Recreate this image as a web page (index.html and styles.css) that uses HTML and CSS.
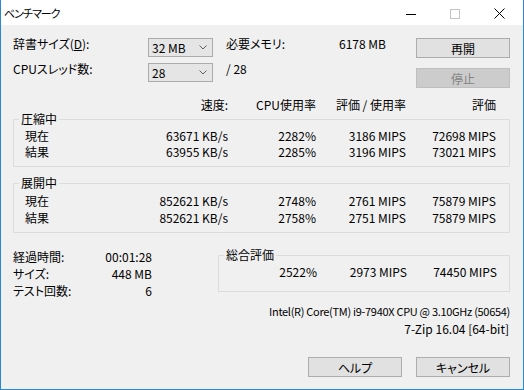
FILE: index.html
```html
<!DOCTYPE html>
<html lang="ja">
<head>
    <meta charset="UTF-8">
    <title>ベンチマーク</title>
    <link rel="stylesheet" href="styles.css">
</head>
<body>
    <div class="window">
        <div class="titlebar">
            <span class="title">ベンチマーク</span>
            <div class="caption">
                <span class="cap-btn">
                    <svg width="10" height="10" viewBox="0 0 10 10"><path d="M0 5.5h10" stroke="#000" stroke-width="1"/></svg>
                </span>
                <span class="cap-btn">
                    <svg width="10" height="10" viewBox="0 0 10 10"><rect x="0.5" y="0.5" width="9" height="9" fill="none" stroke="#c4c4c4" stroke-width="1"/></svg>
                </span>
                <span class="cap-btn">
                    <svg width="11" height="11" viewBox="0 0 11 11"><path d="M0.5 0.5l10 10M10.5 0.5l-10 10" stroke="#000" stroke-width="1"/></svg>
                </span>
            </div>
        </div>

        <div class="content">
            <div class="top">
                <div class="settings">
                    <label class="field-label">辞書サイズ(<u>D</u>):</label>
                    <div class="combo">
                        <span>32 MB</span>
                        <svg width="8" height="5" viewBox="0 0 8 5"><path d="M0.5 0.5l3.5 3.5 3.5-3.5" fill="none" stroke="#606060" stroke-width="1"/></svg>
                    </div>
                    <div class="info">
                        <span>必要メモリ:</span>
                        <span>6178 MB</span>
                    </div>
                    <label class="field-label">CPUスレッド数:</label>
                    <div class="combo">
                        <span>28</span>
                        <svg width="8" height="5" viewBox="0 0 8 5"><path d="M0.5 0.5l3.5 3.5 3.5-3.5" fill="none" stroke="#606060" stroke-width="1"/></svg>
                    </div>
                    <div class="info">
                        <span>/ 28</span>
                    </div>
                </div>
                <div class="actions">
                    <button class="btn">再開</button>
                    <button class="btn" disabled>停止</button>
                </div>
            </div>

            <div class="cols header">
                <span></span>
                <span>速度:</span>
                <span>CPU使用率</span>
                <span>評価 / 使用率</span>
                <span>評価</span>
            </div>

            <fieldset class="group">
                <legend>圧縮中</legend>
                <div class="cols">
                    <span>現在</span>
                    <span>63671 KB/s</span>
                    <span>2282%</span>
                    <span>3186 MIPS</span>
                    <span>72698 MIPS</span>
                    <span>結果</span>
                    <span>63955 KB/s</span>
                    <span>2285%</span>
                    <span>3196 MIPS</span>
                    <span>73021 MIPS</span>
                </div>
            </fieldset>

            <fieldset class="group group-decomp">
                <legend>展開中</legend>
                <div class="cols">
                    <span>現在</span>
                    <span>852621 KB/s</span>
                    <span>2748%</span>
                    <span>2761 MIPS</span>
                    <span>75879 MIPS</span>
                    <span>結果</span>
                    <span>852621 KB/s</span>
                    <span>2758%</span>
                    <span>2751 MIPS</span>
                    <span>75879 MIPS</span>
                </div>
            </fieldset>

            <div class="summary">
                <div class="stats">
                    <span>経過時間:</span><span>00:01:28</span>
                    <span>サイズ:</span><span>448 MB</span>
                    <span>テスト回数:</span><span>6</span>
                </div>
                <fieldset class="group total">
                    <legend>総合評価</legend>
                    <div class="total-cols">
                        <span>2522%</span>
                        <span>2973 MIPS</span>
                        <span>74450 MIPS</span>
                    </div>
                </fieldset>
            </div>

            <div class="cpu">Intel(R) Core(TM) i9-7940X CPU @ 3.10GHz (50654)</div>
            <div class="version">7-Zip 16.04 [64-bit]</div>

            <div class="footer">
                <button class="btn">ヘルプ</button>
                <button class="btn">キャンセル</button>
            </div>
        </div>
    </div>
</body>
</html>
```

FILE: styles.css
```css
body {
    margin: 0;
    font-family: "Noto Sans CJK JP", "Noto Sans", sans-serif;
    font-size: 12px;
    font-feature-settings: "palt";
    color: #000;
    background: #fff;
}
.window {
    width: 524px;
    height: 390px;
    box-sizing: border-box;
    border: 1px solid #2b88d8;
    border-top: none;
    background: #f0f0f0;
    display: flex;
    flex-direction: column;
}
.titlebar {
    height: 25px;
    background: #fff;
    display: flex;
    align-items: center;
    padding-left: 3px;
    padding-right: 2px;
}
.title {
    line-height: 14px;
    margin-top: 1px;
    font-size: 11px;
    letter-spacing: -1px;
}
.caption {
    margin-left: auto;
    display: flex;
    height: 100%;
}
.cap-btn {
    width: 44px;
    display: flex;
    align-items: center;
    justify-content: center;
    padding-top: 2px;
}

/* main area */
.content {
    flex: 1;
    display: flex;
    flex-direction: column;
    padding: 13px 13px 12px 12px;
}
.top {
    display: flex;
    align-items: flex-start;
}
.settings {
    display: grid;
    grid-template-columns: 135px 65px 173px;
    grid-auto-rows: 19px;
    row-gap: 6px;
}
.field-label {
    line-height: 12px;
}
.combo {
    box-sizing: border-box;
    height: 19px;
    border: 1px solid #acacac;
    background: #e5e5e5;
    display: flex;
    align-items: center;
    justify-content: space-between;
    padding: 0 5px 0 3px;
}
.info {
    display: flex;
    justify-content: space-between;
    padding-left: 13px;
    line-height: 12px;
}
.actions {
    margin-left: auto;
    display: flex;
    flex-direction: column;
    gap: 10px;
}
.btn {
    width: 94px;
    height: 20px;
    box-sizing: border-box;
    border: 1px solid #adadad;
    background: #e1e1e1;
    font-family: inherit;
    font-size: 12px;
    font-feature-settings: "palt";
    color: #000;
    padding: 0;
}
.btn:disabled {
    background: #cccccc;
    border-color: #bfbfbf;
    color: #838383;
}

/* result table */
.cols {
    display: grid;
    grid-template-columns: 60px 143px 88px 90px 90px;
    grid-auto-rows: 16px;
    line-height: 16px;
}
.cols span:not(:nth-child(5n+1)) {
    text-align: right;
}
.header {
    margin-top: 10px;
    padding-left: 12px;
    line-height: 14px;
    grid-auto-rows: 14px;
}
.group {
    margin: 0;
    padding: 0 0 6px 11px;
    border: 1px solid #dcdcdc;
    min-width: 0;
}
.group legend {
    padding: 0 2px;
    margin-left: -6px;
    line-height: 14px;
}
.group .cols {
    margin-top: 2px;
}
.group-decomp {
    margin-top: 9px;
    padding-bottom: 6px;
}
.group-decomp .cols {
    grid-auto-rows: 17px;
    line-height: 17px;
}

/* summary */
.summary {
    margin-top: 15px;
    display: flex;
    align-items: flex-start;
}
.stats {
    width: 139px;
    display: grid;
    grid-template-columns: 1fr auto;
    grid-auto-rows: 17px;
    line-height: 17px;
}
.stats span:nth-child(2n) {
    text-align: right;
}
.total {
    margin-left: auto;
    width: 292px;
    box-sizing: border-box;
    padding: 0 0 11px 0;
}
.total legend {
    margin-left: 5px;
}
.total-cols {
    display: grid;
    grid-template-columns: 98px 90px 90px;
    margin-top: 2px;
    line-height: 16px;
    text-align: right;
}
.cpu {
    margin-top: 5px;
    text-align: right;
    line-height: 14px;
    font-size: 11px;
    letter-spacing: -0.3px;
}
.version {
    margin-top: 4px;
    text-align: right;
    line-height: 14px;
    padding-right: 1px;
}
.footer {
    margin-top: auto;
    display: flex;
    justify-content: flex-end;
    gap: 14px;
}
```
